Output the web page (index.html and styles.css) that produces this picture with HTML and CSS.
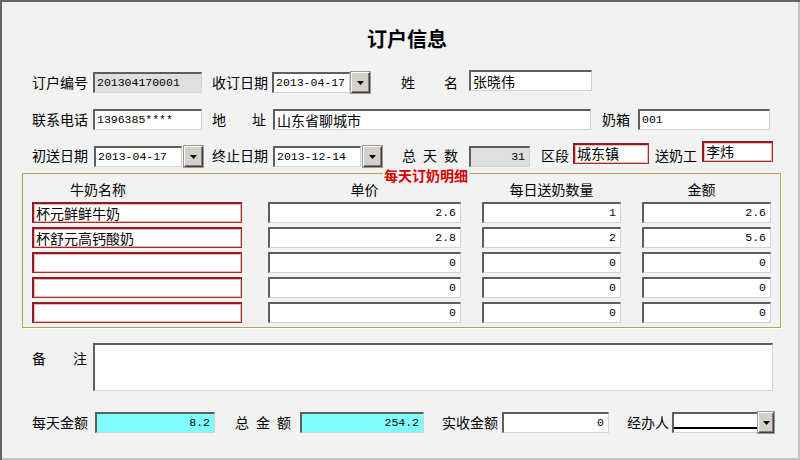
FILE: index.html
```html
<!DOCTYPE html>
<html lang="zh">
<head>
<meta charset="utf-8">
<title>订户信息</title>
<link rel="stylesheet" href="styles.css">
</head>
<body>
<div class="frame">
  <h1 class="title">订户信息</h1>

  <div class="row r1">
    <span class="lbl w56">订户编号</span>
    <div class="box gray num ml5 w109">201304170001</div>
    <span class="lbl ml10 w56">收订日期</span>
    <div class="box num ml4 w78">2013-04-17</div>
    <div class="btn ml1"><svg width="7" height="4" viewBox="0 0 7 4"><path d="M0 0H7L3.5 4Z" fill="#000"/></svg></div>
    <span class="lbl sp ml31 w57"><span>姓</span><span>名</span></span>
    <div class="box ml11 w123 up2">张晓伟</div>
  </div>

  <div class="row r2">
    <span class="lbl w56">联系电话</span>
    <div class="box num ml5 w109">1396385****</div>
    <span class="lbl sp ml10 w54"><span>地</span><span>址</span></span>
    <div class="box ml7 w318">山东省聊城市</div>
    <span class="lbl ml11 w28">奶箱</span>
    <div class="box num ml8 w132">001</div>
  </div>

  <div class="row r3">
    <span class="lbl w56">初送日期</span>
    <div class="box num ml6 w88">2013-04-17</div>
    <div class="btn ml2"><svg width="7" height="4" viewBox="0 0 7 4"><path d="M0 0H7L3.5 4Z" fill="#000"/></svg></div>
    <span class="lbl ml9 w56">终止日期</span>
    <div class="box num ml5 w88">2013-12-14</div>
    <div class="btn ml2"><svg width="7" height="4" viewBox="0 0 7 4"><path d="M0 0H7L3.5 4Z" fill="#000"/></svg></div>
    <span class="lbl sp ml20 w56"><span>总</span><span>天</span><span>数</span></span>
    <div class="box gray num right ml11 w61">31</div>
    <span class="lbl ml11 w28">区段</span>
    <div class="box red top ml4 w76 up3">城东镇</div>
    <span class="lbl ml6 w42">送奶工</span>
    <div class="box red top ml5 w71 up5">李炜</div>
  </div>

  <div class="group">
    <span class="legend">每天订奶明细</span>
    <div class="ghead">
      <span class="c1 hl">牛奶名称</span>
      <span class="c2">单价</span>
      <span class="c3">每日送奶数量</span>
      <span class="c4 hr">金额</span>
    </div>
    <div class="grows">
      <div class="grow">
        <div class="box red c1">杯元鲜鲜牛奶</div>
        <div class="box num right c2">2.6</div>
        <div class="box num right c3">1</div>
        <div class="box num right c4">2.6</div>
      </div>
      <div class="grow">
        <div class="box red c1">杯舒元高钙酸奶</div>
        <div class="box num right c2">2.8</div>
        <div class="box num right c3">2</div>
        <div class="box num right c4">5.6</div>
      </div>
      <div class="grow">
        <div class="box red c1"></div>
        <div class="box num right c2">0</div>
        <div class="box num right c3">0</div>
        <div class="box num right c4">0</div>
      </div>
      <div class="grow">
        <div class="box red c1"></div>
        <div class="box num right c2">0</div>
        <div class="box num right c3">0</div>
        <div class="box num right c4">0</div>
      </div>
      <div class="grow">
        <div class="box red c1"></div>
        <div class="box num right c2">0</div>
        <div class="box num right c3">0</div>
        <div class="box num right c4">0</div>
      </div>
    </div>
  </div>

  <div class="rem">
    <span class="lbl sp w55 remlbl"><span>备</span><span>注</span></span>
    <div class="box memo ml6"></div>
  </div>

  <div class="row r4">
    <span class="lbl w56">每天金额</span>
    <div class="box cyan num right ml7 w120">8.2</div>
    <span class="lbl sp ml20 w56"><span>总</span><span>金</span><span>额</span></span>
    <div class="box cyan num right ml9 w124">254.2</div>
    <span class="lbl ml18 w56">实收金额</span>
    <div class="box num right ml4 w107">0</div>
    <span class="lbl ml18 w42">经办人</span>
    <div class="combo ml3">
      <div class="ctext"></div>
      <div class="btn cbtn"><svg width="7" height="4" viewBox="0 0 7 4"><path d="M0 0H7L3.5 4Z" fill="#000"/></svg></div>
    </div>
  </div>
</div>
</body>
</html>
```

FILE: styles.css
```css
* { box-sizing: border-box; }
html, body { margin: 0; padding: 0; }
body {
  width: 800px;
  height: 460px;
  overflow: hidden;
  background: #f2f2f2;
  font-family: "Noto Sans CJK SC", "Liberation Sans", sans-serif;
  font-size: 14px;
  color: #000;
}
.frame {
  width: 800px;
  height: 460px;
  background: #f2f2f2;
  box-shadow: inset 2px 2px 0 #646464, inset -2px -2px 0 #c4c4c4;
  overflow: hidden;
}
.title {
  margin: 0;
  padding: 26px 0 0 14px;
  height: 54px;
  line-height: 26px;
  font-size: 20px;
  font-weight: bold;
  text-align: center;
}
.row {
  display: flex;
  align-items: flex-start;
  height: 21px;
  padding-left: 32px;
}
.r1 { margin-top: 18px; }
.r2, .r3 { margin-top: 16px; }
.r4 { margin-top: 21px; }

.lbl {
  flex: none;
  height: 21px;
  line-height: 21px;
  white-space: nowrap;
}
.r3 .lbl { height: 19px; line-height: 19px; }
.sp { display: flex; justify-content: space-between; }

.box {
  flex: none;
  height: 21px;
  background: #fff;
  border-style: solid;
  border-width: 2px 1px 1px 2px;
  border-color: #5e5e5e #d2d2d2 #d2d2d2 #5e5e5e;
  padding: 0 2px;
  line-height: 18px;
  white-space: nowrap;
  overflow: hidden;
}
.num { font-family: "Liberation Mono", "DejaVu Sans Mono", monospace; font-size: 11.5px; }
.right { text-align: right; padding-right: 4px; }
.gray { background: #dfdfdf; }
.cyan { background: #80ffff; }
.red {
  border-color: #8b2020 #a03030 #a03030 #8b2020;
  box-shadow: inset 0 0 0 1px #f2b3b3;
}
.top { line-height: 16px; }
.up2 { margin-top: -2px; }
.up3 { margin-top: -3px; }
.up5 { margin-top: -5px; }

.btn {
  flex: none;
  width: 19px;
  height: 21px;
  background: #d4d0c8;
  border: 1px solid;
  border-color: #ffffff #404040 #404040 #ffffff;
  box-shadow: inset -1px -1px 0 #808080, 0 0 0 1px #9a9a9a;
  display: flex;
  align-items: center;
  justify-content: center;
}
.btn svg { display: block; }

.w28 { width: 28px; } .w42 { width: 42px; } .w54 { width: 54px; } .w55 { width: 55px; }
.w56 { width: 56px; } .w57 { width: 57px; } .w61 { width: 61px; } .w71 { width: 71px; }
.w76 { width: 76px; } .w78 { width: 78px; } .w88 { width: 88px; } .w107 { width: 107px; }
.w109 { width: 109px; } .w120 { width: 120px; } .w123 { width: 123px; } .w124 { width: 124px; }
.w132 { width: 132px; } .w318 { width: 318px; }
.ml1 { margin-left: 1px; } .ml2 { margin-left: 2px; } .ml3 { margin-left: 3px; } .ml4 { margin-left: 4px; }
.ml5 { margin-left: 5px; } .ml6 { margin-left: 6px; } .ml7 { margin-left: 7px; } .ml8 { margin-left: 8px; }
.ml9 { margin-left: 9px; } .ml10 { margin-left: 10px; } .ml11 { margin-left: 11px; }
.ml18 { margin-left: 18px; } .ml20 { margin-left: 20px; } .ml31 { margin-left: 31px; }

.group {
  position: relative;
  margin: 6px 0 0 22px;
  width: 759px;
  height: 155px;
  border: 1px solid #b3a64a;
  box-shadow: 1px 1px 0 #ffffff;
}
.legend {
  position: absolute;
  left: 360px;
  top: -5px;
  padding: 0 1px;
  background: #f2f2f2;
  color: #d40000;
  font-weight: bold;
  font-size: 14px;
  line-height: 13px;
  height: 13px;
}
.ghead {
  display: flex;
  margin-top: 7px;
  height: 16px;
  line-height: 16px;
}
.ghead span { flex: none; text-align: center; }
.ghead .hl { text-align: left; padding-left: 38px; }
.ghead .hr { padding-right: 10px; }
.c1 { margin-left: 9px; width: 210px; }
.c2 { margin-left: 26px; width: 193px; }
.c3 { margin-left: 21px; width: 139px; }
.c4 { margin-left: 21px; width: 129px; }
.grows {
  display: flex;
  flex-direction: column;
  gap: 4px;
  margin-top: 5px;
}
.grow { display: flex; height: 21px; }

.rem {
  display: flex;
  align-items: flex-start;
  padding-left: 32px;
  margin-top: 15px;
}
.remlbl { margin-top: 5px; }
.memo { width: 680px; height: 48px; }

.combo {
  flex: none;
  display: flex;
  width: 102px;
  height: 21px;
}
.ctext {
  flex: 1;
  height: 21px;
  background: #fff;
  border-style: solid;
  border-width: 2px 0 1px 2px;
  border-color: #5e5e5e #d2d2d2 #d2d2d2 #5e5e5e;
  box-shadow: inset 0 -3px 0 #ffffff, inset 0 -5px 0 #000000;
}
.cbtn { width: 16px; }
```
